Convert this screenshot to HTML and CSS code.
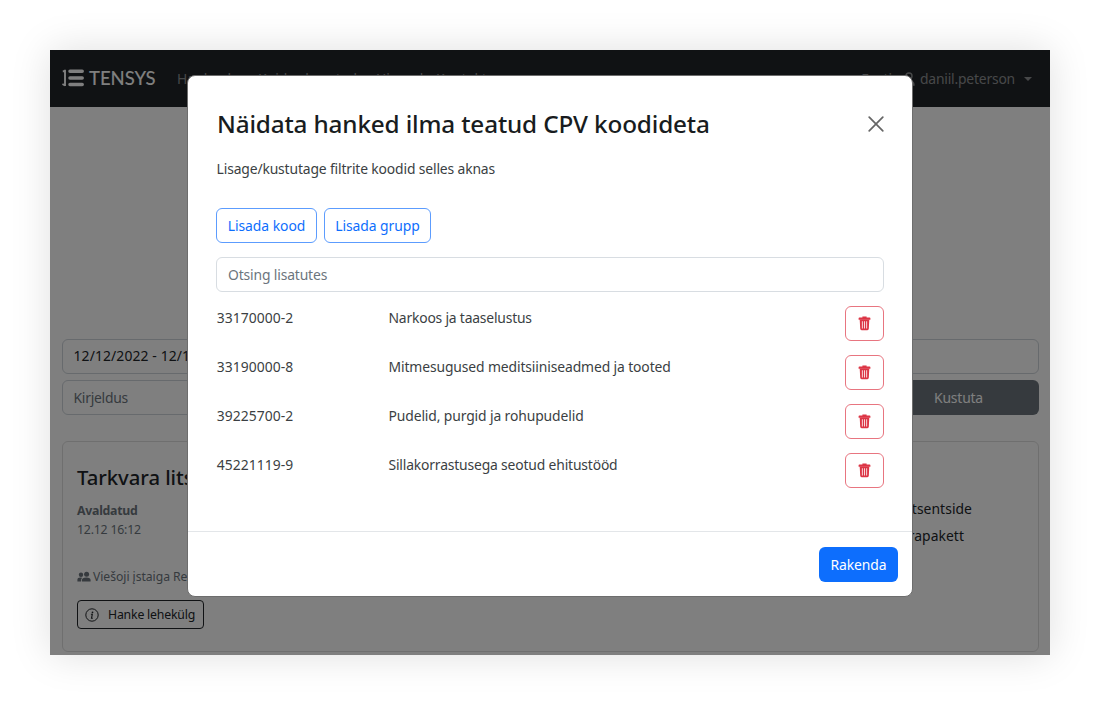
FILE: index.html
```
<!DOCTYPE html>
<html lang="et">
<head>
<meta charset="utf-8">
<title>Tensys</title>
<link rel="stylesheet" href="styles.css">
</head>
<body>
<svg class="sprite" aria-hidden="true">
  <symbol id="trash" viewBox="0 0 13 15">
    <path d="M4.400 .5h4.200v1h3q.8 0 .8.8v1.500H.6V2.300q0-.8.8-.8h3z"/>
    <path fill-rule="evenodd" d="M1.700 3.500h9.600l-.5 9.300q-.1 1.400-1.400 1.400H3.600q-1.300 0-1.400-1.400zM3.900 5.200v7.400h.8V5.200zm2.200 0v7.400h.8V5.200zm2.200 0v7.400h.8V5.200z"/>
  </symbol>
</svg>
<div class="app">
  <header class="navbar">
    <div class="brand">
      <svg class="brand-mark" viewBox="0 0 22 18" width="22" height="18">
        <path d="M3 .8v16.200M.8 2.200H3M.4 15l2.600 1.500" fill="none" stroke="#fff" stroke-width="1.900"/>
        <path d="M8 2.300h12.200M8 8.900h12.200M8 15.500h12.200" stroke="#fff" stroke-width="3.500" stroke-linecap="round"/>
      </svg>
      <span>TENSYS</span>
    </div>
    <nav class="links"><span class="link-a">Hankeplaan</span><span class="link-b">Kuidas kasutada</span><span class="link-c">Hinnad</span><span>Kontakt</span></nav>
    <div class="account">
      <span>Eesti</span>
      <svg class="user" viewBox="0 0 12 14" width="12" height="14" fill="none" stroke="currentColor" stroke-width="1.400"><circle cx="6" cy="4" r="3"/><path d="M1 13q0-4 5-4t5 4z"/></svg>
      <span class="username">daniil.peterson</span>
      <i class="caret"></i>
    </div>
  </header>
  <main class="page">
    <div class="field dates">12/12/2022 - 12/12</div>
    <div class="filter-row">
      <div class="field hint">Kirjeldus</div>
      <div class="clear">Kustuta</div>
    </div>
    <section class="card">
      <div class="tender">
        <h2>Tarkvara litsen</h2>
        <strong>Avaldatud</strong>
        <span class="time">12.12 16:12</span>
        <div class="buyer">
          <svg viewBox="0 0 14 12" width="14" height="12" fill="currentColor"><circle cx="4" cy="3.700" r="2.200"/><circle cx="9.600" cy="3.300" r="2.500"/><path d="M.4 10.500V8.800q0-2.200 3-2.200l1.700.1Q4 7.600 4 10.500zM4.900 10.500V9.200q0-2.600 4.400-2.600t4.300 2.600v1.300z"/></svg>
          <span>Viešoji įstaiga Respublikinė</span>
        </div>
        <div class="page-link">
          <svg viewBox="0 0 14 14" width="14" height="14"><circle cx="7" cy="7" r="6.200" fill="none" stroke="currentColor"/><circle cx="7.500" cy="4.300" r=".9" fill="currentColor"/><path d="M5.900 6.300h1.400l-.8 4h1.300" fill="none" stroke="currentColor" stroke-width="1.100"/></svg>
          <span>Hanke lehekülg</span>
        </div>
      </div>
      <div class="summary"><span>Tarkvara litsentside</span><span class="second">tarkvarapakett</span></div>
    </section>
  </main>
  <div class="backdrop"></div>
  <div class="modal" role="dialog">
    <div class="modal-body">
      <div class="modal-head">
        <h1>Näidata hanked ilma teatud CPV koodideta</h1>
        <svg class="close" viewBox="0 0 16 16" width="16" height="16"><path d="M1.200 1.200l13.600 13.600M14.800 1.200L1.200 14.800" stroke="#666" stroke-width="1.700" stroke-linecap="round"/></svg>
      </div>
      <p class="lead">Lisage/kustutage filtrite koodid selles aknas</p>
      <div class="actions"><button class="outline kood"><span>Lisada kood</span></button><button class="outline grupp"><span>Lisada grupp</span></button></div>
      <div class="search">Otsing lisatutes</div>
      <div class="codes">
        <div class="row"><span class="code">33170000-2</span><span class="name n1">Narkoos ja taaselustus</span><button class="delete"><svg><use href="#trash"/></svg></button></div>
        <div class="row"><span class="code">33190000-8</span><span class="name">Mitmesugused meditsiiniseadmed ja tooted</span><button class="delete"><svg><use href="#trash"/></svg></button></div>
        <div class="row"><span class="code">39225700-2</span><span class="name">Pudelid, purgid ja rohupudelid</span><button class="delete"><svg><use href="#trash"/></svg></button></div>
        <div class="row"><span class="code">45221119-9</span><span class="name n4">Sillakorrastusega seotud ehitustööd</span><button class="delete"><svg><use href="#trash"/></svg></button></div>
      </div>
    </div>
    <div class="modal-foot"><button class="apply">Rakenda</button></div>
  </div>
</div>
</body>
</html>
```
FILE: styles.css
```
* { box-sizing: border-box; }
body { margin: 0; padding: 50px; height: 705px; overflow: hidden; background: #fff; font: 13.9px/22px "Noto Sans", "Open Sans", sans-serif; color: #212529; }
button { font: inherit; padding: 0; background: #fff; }
h1, h2, p { margin: 0; }
.sprite { display: none; }
.app { position: relative; width: 1000px; height: 605px; background: #fff; box-shadow: 0 0 38px rgba(0,0,0,.13); overflow: clip; overflow-clip-margin: 50px; }
.navbar { height: 57px; display: flex; align-items: center; padding: 0 18px 0 12px; background: #212529; color: #8f9193; }
.brand { display: flex; align-items: center; gap: 5px; width: 115px; margin-top: -2px; color: #fff; font: 500 18.5px/24px Lato, sans-serif; letter-spacing: -.05px; }
.links { display: flex; white-space: nowrap; }
.link-a { width: 81px; }
.link-b { width: 118px; }
.link-c { width: 60px; }
.account { margin-left: auto; display: flex; align-items: center; }
.user { margin: 0 5px 0 11px; }
.username { letter-spacing: -.2px; }
.caret { margin-left: 9px; border: 4.500px solid transparent; border-top-color: currentColor; border-bottom: 0; }
.page { padding: 231.500px 11.500px 0; }
.field { height: 35px; border: 1px solid #ced4da; border-radius: 6px; padding: 5.500px 11px; }
.dates { letter-spacing: .12px; }
.filter-row { display: flex; gap: 7px; margin: 6.500px 0 25.500px; }
.filter-row .field { flex: 1; }
.hint { color: #6c757d; letter-spacing: -.25px; }
.clear { width: 160px; height: 35px; padding-top: 7px; text-align: center; border-radius: 6px; background: #6c757d; color: #fff; letter-spacing: -.2px; }
.card { height: 211px; display: flex; justify-content: space-between; border: 1px solid #dfdfdf; border-radius: 6px; padding: 20px 65.500px 0 14.500px; }
.tender { display: flex; flex-direction: column; align-items: flex-start; white-space: nowrap; }
.tender h2 { font-size: 20.300px; font-weight: 500; line-height: 30px; letter-spacing: -.05px; }
.tender strong { margin-top: 9px; font-size: 12.300px; line-height: 19px; color: #6c757d; letter-spacing: -.25px; }
.time { font-size: 12.300px; line-height: 19px; color: #6c757d; letter-spacing: -.2px; }
.buyer { display: flex; align-items: center; gap: 2px; margin-top: 28.500px; font-size: 12.200px; line-height: 20px; color: #6c757d; letter-spacing: -.05px; }
.page-link { display: flex; align-items: center; gap: 9px; height: 29px; width: 127px; margin-top: 13px; padding-left: 7px; border: 1px solid #212529; border-radius: 4px; font-size: 12.300px; letter-spacing: -.2px; }
.summary { display: flex; flex-direction: column; text-align: right; padding-top: 33.500px; line-height: 27px; letter-spacing: .05px; }
.second { padding-right: 8px; }
.backdrop { position: absolute; inset: 0; background: rgba(0,0,0,.5); }
.modal { position: absolute; left: 137px; top: 25px; width: 726px; height: 522px; display: flex; flex-direction: column; background: #fff; border: 1px solid #6d6d6d; border-radius: 8px; }
.modal-body { flex: 1; padding: 29px 28px 0; }
.modal-head { display: flex; align-items: center; justify-content: space-between; height: 38px; }
.modal-head h1 { padding-left: 1px; font-size: 24.300px; font-weight: 500; line-height: 36px; letter-spacing: -.16px; white-space: nowrap; color: #181c20; }
.close { fill: none; }
.lead { margin-top: 15px; padding-left: .6px; color: #3b3f43; letter-spacing: -.15px; }
.actions { display: flex; gap: 7px; margin-top: 28px; }
.outline { height: 35px; border: 1px solid #5c9cfe; border-radius: 6px; color: #0d6efd; letter-spacing: -.05px; }
.kood { width: 101px; }
.grupp { width: 107px; }
.search { margin-top: 14px; height: 35px; border: 1px solid #d8dde2; border-radius: 6px; padding: 6px 11px; color: #6c757d; letter-spacing: -.15px; }
.codes { display: flex; flex-direction: column; gap: 14px; margin-top: 14px; color: #3b3f43; }
.row { display: flex; height: 35px; }
.code { width: 172.500px; padding: 1px 0 0 .8px; letter-spacing: .05px; }
.name { flex: 1; padding-top: 1px; letter-spacing: -.12px; }
.n1 { letter-spacing: -.2px; }
.n4 { letter-spacing: -.17px; }
.delete { width: 39px; height: 35px; border: 1px solid #e87580; border-radius: 6px; color: #dc3545; display: grid; place-items: center; }
.delete svg { width: 13px; height: 15px; fill: currentColor; }
.modal-foot { height: 65px; border-top: 1px solid #e3e6e9; padding: 15px 14px; display: flex; justify-content: flex-end; }
.apply { width: 79px; height: 35px; border: 0; border-radius: 6px; background: #0d6efd; color: #fff; letter-spacing: -.1px; }
```
